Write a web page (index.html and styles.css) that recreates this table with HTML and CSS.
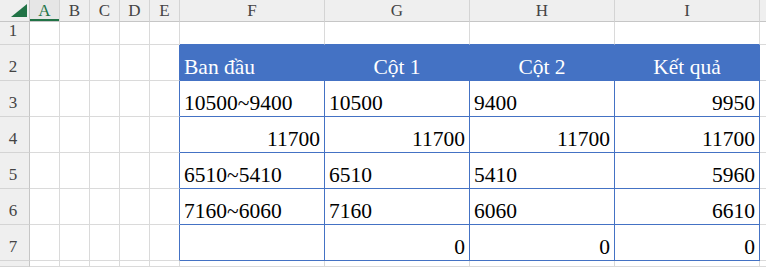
FILE: index.html
```html
<!DOCTYPE html>
<html lang="vi">
<head>
<meta charset="utf-8">
<title>Sheet</title>
<link rel="stylesheet" href="styles.css">
</head>
<body>
<div class="sheet">
  <!-- header row -->
  <div class="corner"><svg class="tri" width="16" height="13" viewBox="0 0 16 13"><polygon points="16,0 16,13 0,13" fill="#217346"/></svg></div>
  <div class="colhd sel">A</div>
  <div class="colhd">B</div>
  <div class="colhd">C</div>
  <div class="colhd">D</div>
  <div class="colhd">E</div>
  <div class="colhd">F</div>
  <div class="colhd">G</div>
  <div class="colhd">H</div>
  <div class="colhd">I</div>
  <div class="colhd last"></div>

  <!-- row 1 -->
  <div class="rowhd">1</div>
  <div class="c"></div><div class="c"></div><div class="c"></div><div class="c"></div><div class="c"></div>
  <div class="c above"></div><div class="c above"></div><div class="c above"></div><div class="c above"></div>
  <div class="c"></div>

  <!-- row 2 -->
  <div class="rowhd">2</div>
  <div class="c"></div><div class="c"></div><div class="c"></div><div class="c"></div><div class="c lefttb"></div>
  <div class="c th">Ban đầu</div>
  <div class="c th ctr">Cột 1</div>
  <div class="c th ctr">Cột 2</div>
  <div class="c th ctr">Kết quả</div>
  <div class="c"></div>

  <!-- row 3 -->
  <div class="rowhd">3</div>
  <div class="c"></div><div class="c"></div><div class="c"></div><div class="c"></div><div class="c lefttb"></div>
  <div class="c td">10500~9400</div>
  <div class="c td">10500</div>
  <div class="c td">9400</div>
  <div class="c td num">9950</div>
  <div class="c"></div>

  <!-- row 4 -->
  <div class="rowhd">4</div>
  <div class="c"></div><div class="c"></div><div class="c"></div><div class="c"></div><div class="c lefttb"></div>
  <div class="c td num">11700</div>
  <div class="c td num">11700</div>
  <div class="c td num">11700</div>
  <div class="c td num">11700</div>
  <div class="c"></div>

  <!-- row 5 -->
  <div class="rowhd">5</div>
  <div class="c"></div><div class="c"></div><div class="c"></div><div class="c"></div><div class="c lefttb"></div>
  <div class="c td">6510~5410</div>
  <div class="c td">6510</div>
  <div class="c td">5410</div>
  <div class="c td num">5960</div>
  <div class="c"></div>

  <!-- row 6 -->
  <div class="rowhd">6</div>
  <div class="c"></div><div class="c"></div><div class="c"></div><div class="c"></div><div class="c lefttb"></div>
  <div class="c td">7160~6060</div>
  <div class="c td">7160</div>
  <div class="c td">6060</div>
  <div class="c td num">6610</div>
  <div class="c"></div>

  <!-- row 7 -->
  <div class="rowhd">7</div>
  <div class="c"></div><div class="c"></div><div class="c"></div><div class="c"></div><div class="c lefttb"></div>
  <div class="c td"></div>
  <div class="c td num">0</div>
  <div class="c td num">0</div>
  <div class="c td num">0</div>
  <div class="c"></div>

  <!-- row 8 -->
  <div class="rowhd"></div>
  <div class="c"></div><div class="c"></div><div class="c"></div><div class="c"></div><div class="c"></div>
  <div class="c"></div><div class="c"></div><div class="c"></div><div class="c"></div>
  <div class="c"></div>
</div>
</body>
</html>
```

FILE: styles.css
```css
* { box-sizing: border-box; }
html, body {
  margin: 0;
  padding: 0;
  background: #ffffff;
}
body {
  width: 766px;
  height: 267px;
  overflow: hidden;
  font-family: "Liberation Serif", "Times New Roman", serif;
}
.sheet {
  display: grid;
  grid-template-columns: 30px 30px 30px 30px 30px 30px 145px 145px 145px 145px 1fr;
  grid-template-rows: 22px 23px 36px 36px 36px 36px 36px 36px 1fr;
  width: 766px;
  height: 267px;
}
.corner {
  background: #efefef;
  border-right: 1px solid #c6c6c6;
  border-bottom: 1px solid #c6c6c6;
  position: relative;
}
.tri {
  position: absolute;
  left: 11px;
  top: 4px;
}
.colhd {
  background: #efefef;
  border-right: 1px solid #d4d4d4;
  border-bottom: 1px solid #c6c6c6;
  color: #444444;
  font-size: 17px;
  display: flex;
  align-items: center;
  justify-content: center;
  padding-top: 1px;
}
.colhd.sel {
  color: #217346;
  background: #e6e6e6;
  box-shadow: inset 0 -2px 0 #217346;
}
.rowhd {
  background: #efefef;
  border-right: 1px solid #c6c6c6;
  border-bottom: 1px solid #d4d4d4;
  color: #444444;
  font-size: 17px;
  display: flex;
  align-items: flex-end;
  justify-content: center;
  padding: 0 3px 3px 0;
  line-height: 20px;
}
.c {
  border-right: 1px solid #dadada;
  border-bottom: 1px solid #dadada;
  display: flex;
  align-items: flex-end;
  padding: 0 4px 1px 4px;
  font-size: 21.5px;
  line-height: 24px;
  color: #000000;
  white-space: nowrap;
  overflow: hidden;
}
.c.above {
  border-bottom-color: #4472c4;
}
.c.lefttb {
  border-right-color: #4472c4;
}
.c.th {
  background: #4472c4;
  color: #ffffff;
  border-right-color: #4472c4;
  border-bottom-color: #4472c4;
}
.c.td {
  border-right-color: #4472c4;
  border-bottom-color: #4472c4;
}
.ctr {
  justify-content: center;
}
.num {
  justify-content: flex-end;
}
```
